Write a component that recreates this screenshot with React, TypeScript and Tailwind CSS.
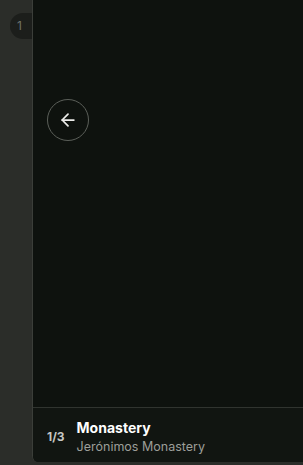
import { ArrowLeft } from "lucide-react";

export default function App() {
  return (
    <div className="relative w-[303px] h-[465px] overflow-hidden bg-[#2b2d29] flex font-['Inter',sans-serif]">
      {/* badge behind the sheet */}
      <div className="absolute left-[10px] top-[13px] h-[26px] w-[50px] rounded-full bg-[#1c1e1b] flex items-center pl-[7px] text-[12px] text-[#6f726c]">
        1
      </div>

      <div className="w-[32px] shrink-0" />

      <div className="relative flex-1 mb-[3px] flex flex-col bg-[#0e120e] border-l border-[#3b3e39] rounded-bl-[6px] overflow-hidden">
        <div className="flex-1 relative">
          <button className="absolute left-[14px] top-[99px] w-[42px] h-[42px] rounded-full border border-[#5b5f59] flex items-center justify-center text-[#ecece9]">
            <ArrowLeft size={20} strokeWidth={2.1} />
          </button>
        </div>

        <div className="h-[55px] border-t border-[#30342f] bg-[#111511] flex items-center pl-[14px] pt-[4px] gap-[12px]">
          <span className="text-[12px] font-bold text-[#c6c7c4]">1/3</span>
          <div className="flex flex-col gap-[2px]">
            <span className="text-[14px] leading-[18px] font-bold text-white">Monastery</span>
            <span className="text-[12.5px] leading-[16px] text-[#9c9e99]">Jerónimos Monastery</span>
          </div>
        </div>
      </div>
    </div>
  );
}
